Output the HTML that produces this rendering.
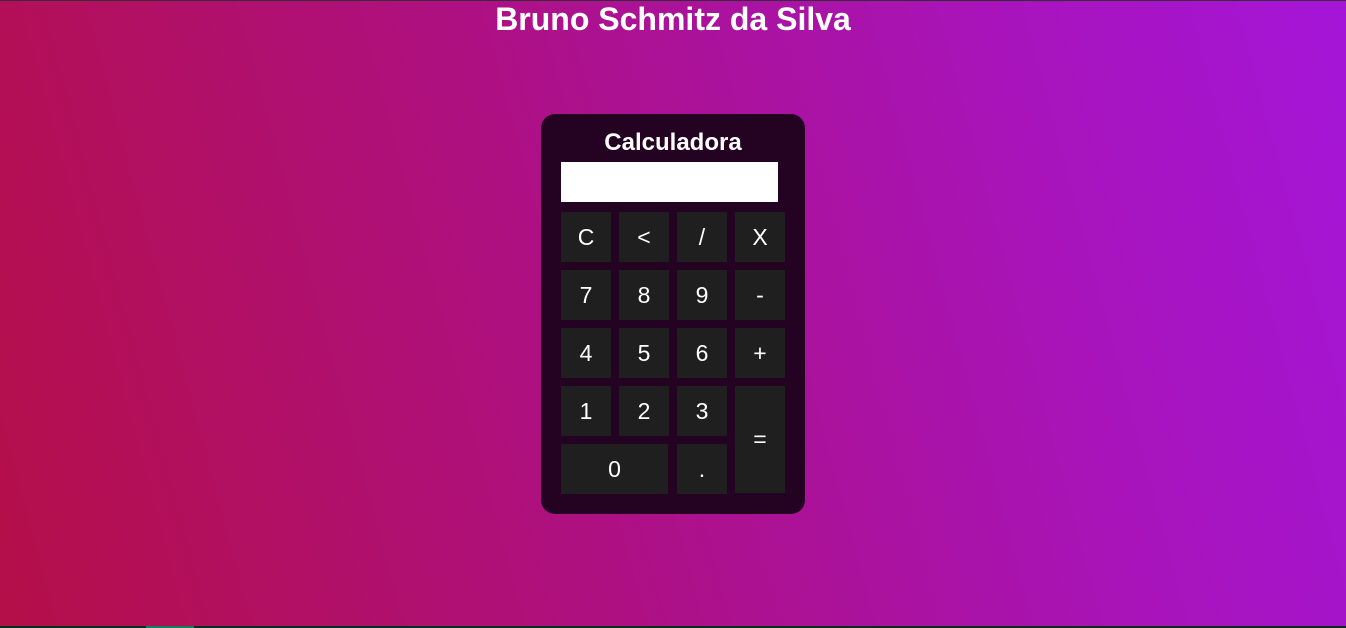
<!DOCTYPE html>
<html><head><style>
html,body{margin:0;padding:0;}
body{width:1346px;height:628px;overflow:hidden;position:relative;font-family:"Liberation Sans",Arial,sans-serif;
background:linear-gradient(75deg,#b50f48 0%,#ae1080 40%,#a814b8 75%,#a515d8 100%);}
.top{position:absolute;left:0;top:0;width:1346px;height:1px;background:#3a2a3a;}
.bot{position:absolute;left:0;top:626px;width:1346px;height:2px;background:#0c2a1e;}
.bot2{position:absolute;left:146px;top:626px;width:48px;height:2px;background:#10805a;}
h1{position:absolute;top:1px;left:0;width:1346px;margin:0;text-align:center;color:#fff;font-size:32px;font-weight:bold;line-height:37px;}
.card{position:absolute;left:541px;top:114px;width:264px;height:400px;background:#230321;border-radius:14px;}
.card h2{position:absolute;top:15px;left:0;width:264px;margin:0;text-align:center;color:#fff;font-size:24px;line-height:28px;}
.disp{position:absolute;left:20px;top:48px;width:217px;height:40px;background:#fff;}
.b{position:absolute;width:50px;height:50px;background:#1f1f1f;color:#fff;font-size:23px;display:flex;align-items:center;justify-content:center;}
</style></head><body>
<div class="top"></div>
<h1>Bruno Schmitz da Silva</h1>
<div class="card">
<h2>Calculadora</h2>
<div class="disp"></div>
<div class="b" style="left:20px;top:98px">C</div>
<div class="b" style="left:78px;top:98px">&lt;</div>
<div class="b" style="left:136px;top:98px">/</div>
<div class="b" style="left:194px;top:98px">X</div>
<div class="b" style="left:20px;top:156px">7</div>
<div class="b" style="left:78px;top:156px">8</div>
<div class="b" style="left:136px;top:156px">9</div>
<div class="b" style="left:194px;top:156px">-</div>
<div class="b" style="left:20px;top:214px">4</div>
<div class="b" style="left:78px;top:214px">5</div>
<div class="b" style="left:136px;top:214px">6</div>
<div class="b" style="left:194px;top:214px">+</div>
<div class="b" style="left:20px;top:272px">1</div>
<div class="b" style="left:78px;top:272px">2</div>
<div class="b" style="left:136px;top:272px">3</div>
<div class="b" style="left:194px;top:272px;height:107px">=</div>
<div class="b" style="left:20px;top:330px;width:107px">0</div>
<div class="b" style="left:136px;top:330px">.</div>
</div>
<div class="bot"></div><div class="bot2"></div>
</body></html>
